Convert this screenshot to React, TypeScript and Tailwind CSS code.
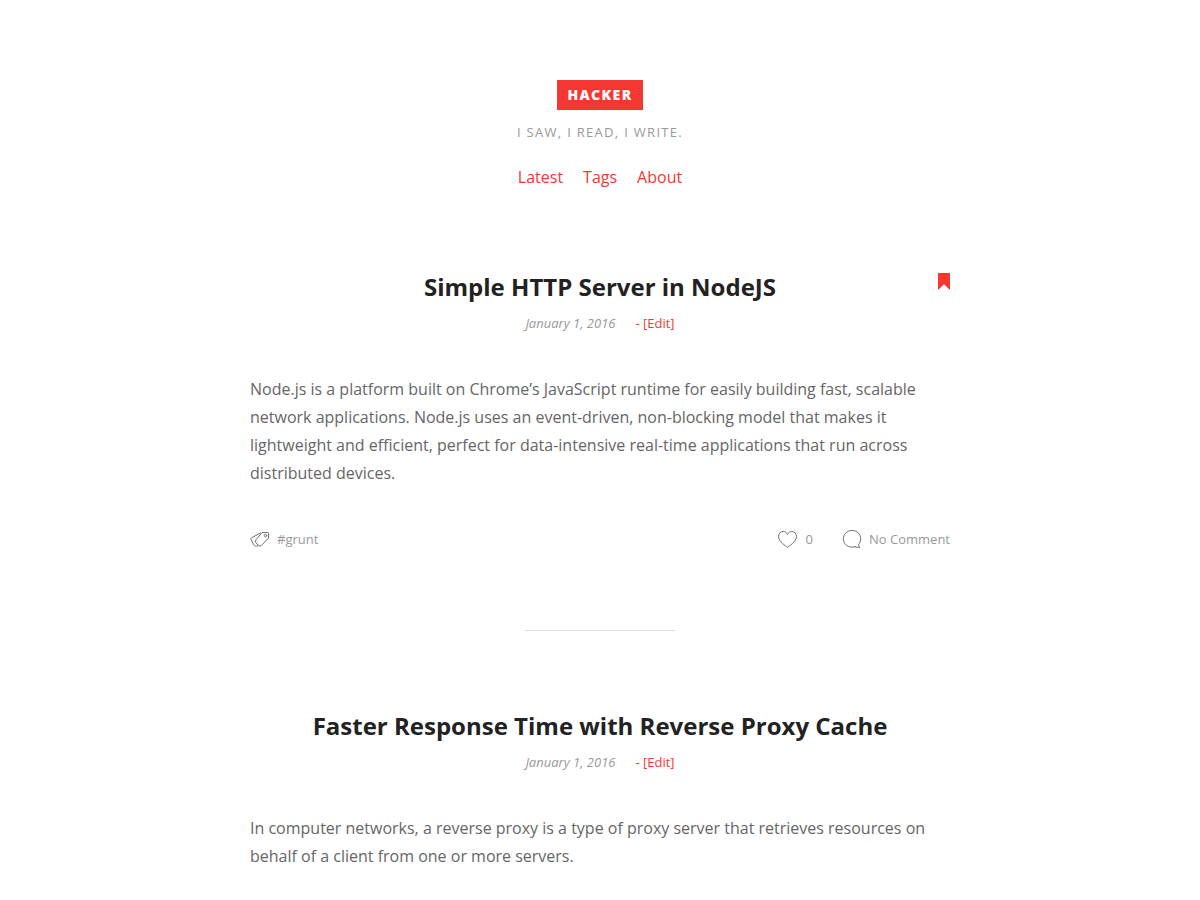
import React from "react";

type Post = {
  title: string;
  date: string;
  body: string;
  featured?: boolean;
  tag?: string;
  likes?: number;
  comments?: string;
};

const posts: Post[] = [
  {
    title: "Simple HTTP Server in NodeJS",
    date: "January 1, 2016",
    body: "Node.js is a platform built on Chrome’s JavaScript runtime for easily building fast, scalable network applications. Node.js uses an event-driven, non-blocking model that makes it lightweight and efficient, perfect for data-intensive real-time applications that run across distributed devices.",
    featured: true,
    tag: "#grunt",
    likes: 0,
    comments: "No Comment",
  },
  {
    title: "Faster Response Time with Reverse Proxy Cache",
    date: "January 1, 2016",
    body: "In computer networks, a reverse proxy is a type of proxy server that retrieves resources on behalf of a client from one or more servers.",
  },
];

const navLinks = ["Latest", "Tags", "About"];

function TagIcon() {
  return (
    <svg aria-hidden="true" width="20" height="18" viewBox="0 0 20 18" fill="none" stroke="#6f6f6f" strokeWidth="1" strokeLinejoin="round" strokeLinecap="round">
      <path d="M12.4 2.5 17.6 2.5Q18.7 2.5 18.7 3.6L18.5 8.1 11.2 15.6Q10 16.8 8.7 15.6L5.8 12.7Q4.7 11.4 5.8 10Z" />
      <circle cx="15.5" cy="5.6" r="1.2" />
      <path d="M10.6 3 1.5 7.8Q.5 8.4 1 9.6L4.2 15.3Q4.9 16.8 6.5 16.2L7.8 15.6" />
    </svg>
  );
}

function HeartIcon() {
  return (
    <svg aria-hidden="true" width="20" height="18" viewBox="0 0 20 18" fill="none" stroke="#6f6f6f" strokeWidth="1" strokeLinejoin="round">
      <path d="M9.5 17.4C8 16.1.5 11.7.5 6.4.5 3.6 2.5 1.5 5.1 1.5c2 0 3.5 1.1 4.4 2.9.9-1.8 2.4-2.9 4.4-2.9 2.6 0 4.6 2.1 4.6 4.9C18.5 11.7 11 16.1 9.5 17.4Z" />
    </svg>
  );
}

function CommentIcon() {
  return (
    <svg aria-hidden="true" width="20" height="18" viewBox="0 0 20 18" fill="none" stroke="#6f6f6f" strokeWidth="1" strokeLinejoin="round" strokeLinecap="round">
      <path d="M12.8 16.7C11.8 17 10.9 17.1 10 17.1 4.9 17.1 1.4 13.4 1.4 8.8S4.9.5 10 .5s8.7 3.7 8.7 8.3c0 2.3-.8 4.3-2.2 5.8l1.1 2.9Q15 17.5 12.8 16.7Z" />
    </svg>
  );
}

function Bookmark() {
  return (
    <svg role="img" aria-label="Featured" className="absolute right-0 top-0" width="12" height="17" viewBox="0 0 12 17" fill="#f53732">
      <path d="M0 0H12V17L6 11.3 0 17Z" />
    </svg>
  );
}

function Article({ post }: { post: Post }) {
  return (
    <article className="relative">
      {post.featured && <Bookmark />}
      <h2 className="text-center text-2xl leading-7 font-bold text-[#222]">
        <a href="#post">{post.title}</a>
      </h2>
      <div className="mt-3 flex justify-center gap-5 text-[13px] leading-5">
        <time className="text-[#999] italic">{post.date}</time>
        <a href="#edit" className="text-[#f53732]">- [Edit]</a>
      </div>
      <p className="mt-[42px] text-base leading-7 text-[#666]">{post.body}</p>
      {post.tag && (
        <footer className="mt-[42px] flex items-center justify-between text-[13px] leading-5 text-[#999]">
          <a href="#tag" className="flex items-center gap-[7px]">
            <TagIcon />
            {post.tag}
          </a>
          <div className="flex items-center gap-[29px]">
            <button type="button" className="flex items-center gap-2">
              <HeartIcon />
              {post.likes}
            </button>
            <a href="#comments" className="flex items-center gap-[7px]">
              <CommentIcon />
              {post.comments}
            </a>
          </div>
        </footer>
      )}
    </article>
  );
}

export default function App() {
  return (
    <div className="min-h-screen bg-white px-5 pt-20 pb-8 font-['Open_Sans',sans-serif]">
      <header className="flex flex-col items-center">
        <h1 className="bg-[#f53732] px-[10px] text-sm leading-[30px] font-extrabold tracking-widest text-white">
          <a href="#home">HACKER</a>
        </h1>
        <p className="mt-3 text-[13px] leading-5 tracking-widest text-[#999]">I SAW, I READ, I WRITE.</p>
        <nav className="mt-[21px] flex gap-5 text-base leading-7 text-[#f53732]">
          {navLinks.map((label) => (
            <a key={label} href={"#" + label.toLowerCase()}>{label}</a>
          ))}
        </nav>
      </header>
      <main className="mx-auto mt-[82px] max-w-[700px]">
        {posts.map((post, index) => (
          <React.Fragment key={post.title}>
            {index > 0 && <hr className="mx-auto my-[81px] w-[150px] border-[#ddd]" />}
            <Article post={post} />
          </React.Fragment>
        ))}
      </main>
    </div>
  );
}
